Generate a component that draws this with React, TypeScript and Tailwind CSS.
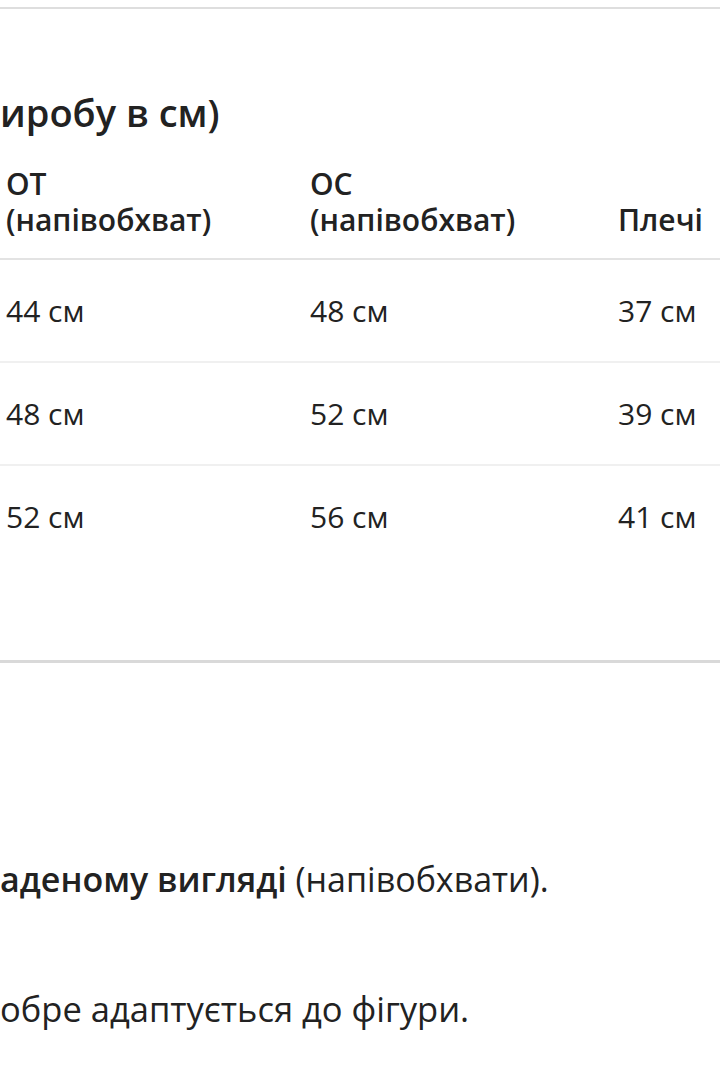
export default function App() {
  const rows = [
    ["44 см", "48 см", "37 см"],
    ["48 см", "52 см", "39 см"],
    ["52 см", "56 см", "41 см"],
  ];
  return (
    <div
      className="w-[720px] h-[1080px] bg-white overflow-hidden text-[#222222]"
      style={{ fontFamily: '"Open Sans", "Noto Sans", sans-serif' }}
    >
      <div className="h-[7px]" />
      <div className="h-[2px] bg-[#dedede]" />
      <div className="h-[80px]" />
      <div className="h-[46px] flex items-center text-[38px] font-semibold leading-none whitespace-nowrap">
        ирoбу в см)
      </div>
      <div className="h-[123px] grid grid-cols-[304px_308px_108px] items-end pb-[20px] text-[30px] font-semibold leading-[36px]">
        <div className="pl-[6px] whitespace-nowrap">
          ОТ
          <br />
          (напівобхват)
        </div>
        <div className="pl-[6px] whitespace-nowrap">
          ОС
          <br />
          (напівобхват)
        </div>
        <div className="pl-[6px] whitespace-nowrap">Плечі</div>
      </div>
      <div className="h-[2px] bg-[#e3e3e3]" />
      {rows.map((r, i) => (
        <div key={i}>
          <div className="h-[101px] grid grid-cols-[304px_308px_108px] items-center text-[30px] leading-none">
            {r.map((c, j) => (
              <div key={j} className="pl-[6px] whitespace-nowrap">
                {c}
              </div>
            ))}
          </div>
          {i < 2 && <div className="h-[2px] bg-[#f0f0f0]" />}
        </div>
      ))}
      <div className="h-[93px]" />
      <div className="h-[3px] bg-[#d9d9d9]" />
      <div className="h-[196px]" />
      <div className="h-[40px] flex items-center text-[34px] leading-none whitespace-nowrap">
        <span className="font-semibold">аденому вигляді</span>
        <span>&nbsp;(напівобхвати).</span>
      </div>
      <div className="h-[90px]" />
      <div className="h-[40px] flex items-center text-[34.5px] leading-none whitespace-nowrap">
        обре адаптується до фігури.
      </div>
    </div>
  );
}
